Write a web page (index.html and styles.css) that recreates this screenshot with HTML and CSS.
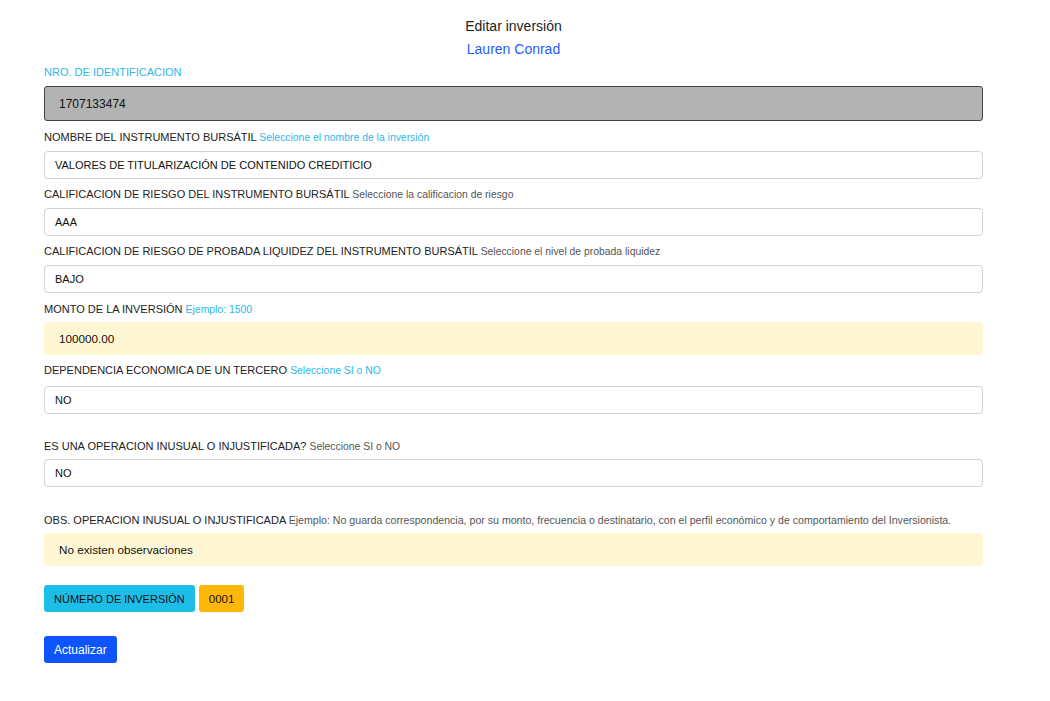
FILE: index.html
```html
<!DOCTYPE html>
<html lang="es">
<head>
<meta charset="utf-8">
<title>Editar inversión</title>
<link rel="stylesheet" href="styles.css">
</head>
<body>
<div class="page">
  <header class="head">
    <div class="title">Editar inversión</div>
    <div class="name">Lauren Conrad</div>
  </header>
  <form class="form">
    <div class="field field-dis">
      <label class="lbl lbl-info">NRO. DE IDENTIFICACION</label>
      <div class="ctrl ctrl-dis">1707133474</div>
    </div>
    <div class="field">
      <label class="lbl">NOMBRE DEL INSTRUMENTO BURSÁTIL <small class="hint hint-info">Seleccione el nombre de la inversión</small></label>
      <div class="ctrl">VALORES DE TITULARIZACIÓN DE CONTENIDO CREDITICIO</div>
    </div>
    <div class="field">
      <label class="lbl">CALIFICACION DE RIESGO DEL INSTRUMENTO BURSÁTIL <small class="hint">Seleccione la calificacion de riesgo</small></label>
      <div class="ctrl">AAA</div>
    </div>
    <div class="field field-b9">
      <label class="lbl">CALIFICACION DE RIESGO DE PROBADA LIQUIDEZ DEL INSTRUMENTO BURSÁTIL <small class="hint">Seleccione el nivel de probada liquidez</small></label>
      <div class="ctrl">BAJO</div>
    </div>
    <div class="field field-warn">
      <label class="lbl">MONTO DE LA INVERSIÓN <small class="hint hint-info">Ejemplo: 1500</small></label>
      <div class="ctrl ctrl-warn">100000.00</div>
    </div>
    <div class="field field-g8">
      <label class="lbl">DEPENDENCIA ECONOMICA DE UN TERCERO <small class="hint hint-info">Seleccione SI o NO</small></label>
      <div class="ctrl">NO</div>
    </div>
    <div class="field field-gap">
      <label class="lbl">ES UNA OPERACION INUSUAL O INJUSTIFICADA? <small class="hint">Seleccione SI o NO</small></label>
      <div class="ctrl">NO</div>
    </div>
    <div class="field field-gap2">
      <label class="lbl">OBS. OPERACION INUSUAL O INJUSTIFICADA <small class="hint hint-obs">Ejemplo: No guarda correspondencia, por su monto, frecuencia o destinatario, con el perfil económico y de comportamiento del Inversionista.</small></label>
      <div class="ctrl ctrl-warn">No existen observaciones</div>
    </div>
    <div class="badges">
      <span class="badge badge-info">NÚMERO DE INVERSIÓN</span>
      <span class="badge badge-warn">0001</span>
    </div>
    <div class="actions">
      <button type="button" class="btn">Actualizar</button>
    </div>
  </form>
</div>
</body>
</html>
```
FILE: styles.css
```css
* { box-sizing: border-box; }
html, body { margin: 0; padding: 0; background: #fff; }
body {
  font-family: "Liberation Sans", Arial, sans-serif;
  color: #212529;
}
.page {
  width: 939px;
  margin-left: 44px;
  padding-top: 17px;
}
.head {
  display: flex;
  flex-direction: column;
  align-items: center;
  gap: 5px;
  margin-bottom: 7px;
}
.title { font-size: 14px; line-height: 18px; color: #222; }
.name { font-size: 14px; line-height: 18px; color: #1f5cff; }
.form { display: flex; flex-direction: column; }
.field { display: flex; flex-direction: column; gap: 6px; margin-bottom: 8px; }
.field-dis { gap: 7px; margin-bottom: 9px; }
.field-b9 { margin-bottom: 9px; }
.field-warn { gap: 5px; }
.field-g8 { gap: 8px; }
.field-gap { margin-top: 17px; gap: 5px; }
.field-gap2 { margin-top: 18px; }
.lbl { font-size: 11px; line-height: 14px; color: #222; }
.lbl-info { color: #2db8ea; }
.hint { font-size: 10.4px; color: #555; }
.hint-obs { font-size: 10.6px; }
.hint-info { color: #2db8ea; }
.ctrl {
  height: 28px;
  border: 1px solid #ced4da;
  border-radius: 4px;
  padding: 0 10px;
  font-size: 11px;
  display: flex;
  align-items: center;
  color: #111;
}
.ctrl-dis {
  height: 35px;
  background: #b3b3b3;
  border: 1px solid #444;
  border-radius: 3px;
  padding: 0 14px;
  font-size: 12px;
}
.ctrl-warn {
  height: 33px;
  background: #fff7d4;
  border: none;
  padding: 0 15px;
  font-size: 11.7px;
}
.badges { display: flex; gap: 4px; margin-top: 11px; }
.badge {
  height: 27px;
  display: inline-flex;
  align-items: center;
  padding: 0 10px;
  border-radius: 3px;
  font-size: 11px;
  color: #111;
}
.badge-info { background: #1cbee8; }
.badge-warn { background: #ffb807; font-size: 11.5px; }
.actions { margin-top: 24px; }
.btn {
  height: 27px;
  padding: 0 10px;
  background: #0f55ff;
  color: #fff;
  border: none;
  border-radius: 3px;
  font-family: "Liberation Sans", Arial, sans-serif;
  font-size: 12px;
}
```
